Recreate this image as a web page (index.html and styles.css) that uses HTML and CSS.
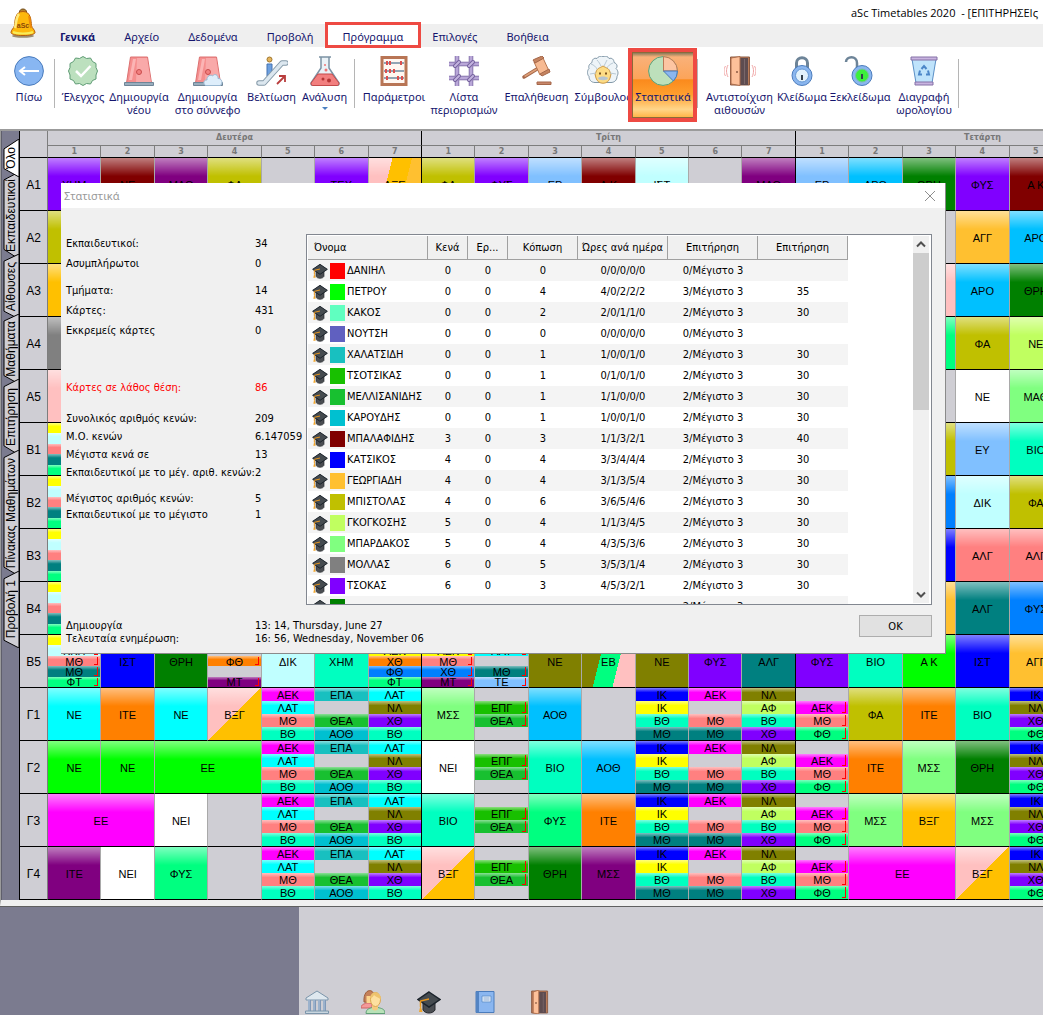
FILE: index.html
```html
<!DOCTYPE html>
<html lang="el">
<head>
<meta charset="utf-8">
<title>aSc Timetables 2020</title>
<link rel="stylesheet" href="styles.css">
</head>
<body>
<svg class="defs" aria-hidden="true">
  <symbol id="cap" viewBox="0 0 24 24">
    <path d="M6 12v8c2 4 10 4 12 0v-8z" fill="#4a4d52" stroke="#26292d"/>
    <path d="M12 2 23 9.500 12 17 1 9.500z" fill="#454b50" stroke="#1b232b" stroke-width="1.500"/>
    <path d="M12 9 3.500 11v6" fill="none" stroke="#e8961e" stroke-width="1.500"/>
    <path d="M3.500 15 2 22h3.500z" fill="#f0a52c"/>
  </symbol>
  <symbol id="siren" viewBox="0 0 30 30">
    <path d="M6.500 1h17l4 26h-25z" fill="#f58e8e" stroke="#dc7171"/>
    <path d="M13 2h10l4 24H12z" fill="#f9a9a9"/>
    <path d="M9 3h3L8 24H5z" fill="#fbb5b5"/>
    <circle cx="15" cy="16" r="2.500" fill="#f28080" stroke="#c94c4c"/>
    <path d="M.5 26.500h29v3H.5z" fill="#98adbd" stroke="#6f8597"/>
  </symbol>
  <symbol id="door" viewBox="0 0 24 24">
    <path d="M2 1h20v22H2z" fill="#b97b59" stroke="#8b5a42"/>
    <path d="M10 2h10v21H10z" fill="#5e4c50"/>
    <path d="M16 3h1v19h-1z" fill="#7a676a"/>
    <path d="M4 2 11 0v24l-7-1z" fill="#fdc09a" stroke="#ab6d4c"/>
    <circle cx="7.500" cy="13" r="1" fill="#8b5a42"/>
  </symbol>
</svg>

<header class="app-head">
  <svg class="bell" viewBox="0 0 26 30" aria-hidden="true">
    <ellipse cx="13" cy="28" rx="11" ry="1.800" fill="#9b8d72"/>
    <path d="M9.500 4c0-4 7-4 7 0" fill="#b9822b" stroke="#6b4613"/>
    <path d="M13 3.500c8 0 8 9 8.500 14 .4 3 3.500 4 3.500 7 0 4-24 4-24 0 0-3 3-4 3.500-7 .5-5 .500-14 8.500-14z" fill="#fdb80c" stroke="#b25b0d"/>
    <path d="M9 6c-3 3-3 11-4 14" fill="none" stroke="#ffe97a" stroke-width="2.500"/>
    <path d="M19 8c1 4 1 8 2 12" fill="none" stroke="#ee8a07" stroke-width="2"/>
    <path d="M3 24c4 2 16 2 20 0" fill="none" stroke="#f8ec5a" stroke-width="2"/>
    <text x="13" y="20" class="bell-text">aSc</text>
  </svg>
  <div class="titlebar">aSc Timetables 2020&nbsp; - [ΕΠΙΤΗΡΗΣΕΙς</div>
  <nav class="tabs">
    <a href="#" class="home">Γενικά</a>
    <a href="#">Αρχείο</a>
    <a href="#">Δεδομένα</a>
    <a href="#">Προβολή</a>
    <a href="#" class="framed">Πρόγραμμα</a>
    <a href="#">Επιλογές</a>
    <a href="#">Βοήθεια</a>
  </nav>
</header>

<div class="ribbon">
  <button class="tool w-s"><svg viewBox="0 0 30 30"><circle cx="15" cy="15" r="14.400" fill="#88b6f2" stroke="#4b7cbc"/><path d="M25 15H7m4-4-5 4 5 4" fill="none" stroke="#fff" stroke-width="2"/></svg><span>Πίσω</span></button>
  <i class="sep close-by"></i>
  <button class="tool w-s"><svg viewBox="0 0 30 30"><path d="m15 .5 3.500 2 4-.5 2 3.500 3.500 2v4l1.500 3.500L28 19v4l-3.500 1.500-2 3.500-4-.5-3.500 2-3.500-2-4 .5-2-3.500L2 23v-4L.5 15 2 11.500v-4L5.500 5.500 7.500 2l4 .5z" fill="#bce0be" stroke="#5f9c75"/><path d="m8 15 5 5L22.500 10" fill="none" stroke="#fff" stroke-width="2.500"/></svg><span>Έλεγχος</span></button>
  <button class="tool w-l"><svg viewBox="0 0 30 30"><use href="#siren"/></svg><span>Δημιουργία<br>νέου</span></button>
  <button class="tool w-xl"><svg viewBox="0 0 30 30"><use href="#siren"/><path d="M13 29.500c-3-.5-3-6 1-5.500-.5-4 4-6 5.500-4 2-3 6-1 5.500 2.500 4-.5 5.500 6 2 7z" fill="#deeefb" stroke="#9bb9d2"/></svg><span>Δημιουργία<br>στο σύννεφο</span></button>
  <button class="tool w-m"><svg viewBox="0 0 32 30"><path d="M11 8h5v12h-5z" fill="#6da0e0" stroke="#4472b0"/><circle cx="13.500" cy="3.500" r="2.500" fill="#e5b45c" stroke="#a0762c"/><path d="M3 27h5L26 7h4" fill="none" stroke="#8499a8" stroke-width="5.500" stroke-linecap="round" stroke-linejoin="round"/><path d="M3 27h5L26 7h4" fill="none" stroke="#dce7ef" stroke-width="3.500" stroke-linecap="round" stroke-linejoin="round"/><path d="m21 28 8-8m-6 0h6v6" fill="none" stroke="#b93d3d" stroke-width="1.800"/></svg><span>Βελτίωση</span></button>
  <button class="tool w-m"><svg viewBox="0 0 30 30"><path d="M9 1h12M11 1v11L1 27c0 2 1 2.500 2 2.500h24c1 0 2-.5 2-2.500L19 12V1" fill="#eaf2f7" stroke="#7c92a4" stroke-width="1.500"/><path d="M8 18h14l7 9c0 2-1 2.500-2 2.500H3c-1 0-2-.5-2-2.500z" fill="#f27f7f" stroke="#c34a4a"/><circle cx="13" cy="23" r="1.500" fill="#b53535"/><circle cx="19" cy="24.500" r="2" fill="#b53535"/><circle cx="15" cy="9" r="1" fill="#ef7474"/><circle cx="16" cy="14" r="1.500" fill="#ef7474"/></svg><span>Ανάλυση</span><b class="drop"></b></button>
  <i class="sep"></i>
  <button class="tool w-lg"><svg viewBox="0 0 30 30"><path d="M3 1.500h24v27H3z" fill="#fff7f1" stroke="#b87555" stroke-width="3"/><path d="M5 7h20M5 15h20M5 22h20" stroke="#6f8aa0" stroke-width="1.500"/><path d="M8 5v4m3-4v4m11-4v4M7 13v4m4-4v4m4-4v4M8 20v4m11-4v4m4-4v4" stroke="#dc4f4f" stroke-width="2"/></svg><span>Παράμετροι</span></button>
  <button class="tool w-lg"><svg viewBox="0 0 30 30"><path d="M8 0v30M22 0v30M0 8h30M0 22h30" stroke="#75629e" stroke-width="4.500"/><path d="M8 0v30M22 0v30M0 8h30M0 22h30" stroke="#b9a7d8" stroke-width="3"/><path d="m6 10 4-4m10 4 4-4M6 24l4-4m10 4 4-4" stroke="#75629e" stroke-width="4" stroke-linecap="round"/><path d="m6 10 4-4m10 4 4-4M6 24l4-4m10 4 4-4" stroke="#c4b4df" stroke-width="2" stroke-linecap="round"/></svg><span>Λίστα<br>περιορισμών</span></button>
  <button class="tool w-xl"><svg viewBox="0 0 30 30"><path d="M2 21 15 13" stroke="#a5674a" stroke-width="3.500" stroke-linecap="round"/><path d="M2.500 20.500 15 13" stroke="#dd9f77" stroke-width="1.500"/><path d="m12 6 9-4 6 13-9 4z" fill="#f7ba92" stroke="#b67650"/><path d="m13 7-2-3 2-1 7-3 2 2zM18 18l9-5 1 3-8 4z" fill="#c58460" stroke="#a5674a"/><path d="M15 26h14v2.500H15z" fill="#c8876a" stroke="#a5674a"/></svg><span>Επαλήθευση</span></button>
  <button class="tool w-m2"><svg viewBox="0 0 32 30"><path d="M16 .5c3-1 5 0 6 2 3-1 5 1 5 4 3 1 4 4 2 6 3 3 2 6 1 8 0 4-3 6-6 6H8c-4 0-6-3-6-6-2-2-2-6 0-8-1-3 1-5 3-6 0-3 2-5 5-4 1-2 4-3 6-2z" fill="#eef4f8" stroke="#8298a8"/><path d="M9 16c1-4 4-4 7-6 3 2 6 2 7 6l1 2-1 4c-2 7-12 7-14 0l-1-4z" fill="#fddc85" stroke="#cb9847"/><path d="M11 22c2-2 8-2 10 0 0 3-10 3-10 0z" fill="#b6c4cf"/><path d="M12 17.500h2m4 0h2" stroke="#7d5420" stroke-width="2"/><path d="M4 8c3 1 5 3 6 5M10 4c2 2 3 4 4 6m12-3c-3 1-5 3-6 5M20 4l-3 6M3 18l6-1m20 1-6-1" fill="none" stroke="#b9c9d4"/></svg><span>Σύμβουλος</span></button>
  <button class="tool w-l active"><svg viewBox="0 0 30 30"><circle cx="15" cy="15" r="14.400" fill="#bde0bb" stroke="#5e9f76"/><path d="M15.500 15V.6A14.400 14.400 0 0 1 29.400 15z" fill="#fdc5a2" stroke="#bd7956"/><path d="M15.500 15h13.900a14 14 0 0 1-4 10z" fill="#8bb6f0" stroke="#4878b5"/></svg><span>Στατιστικά</span></button>
  <i class="sep"></i>
  <button class="tool w-xl"><svg viewBox="0 0 30 30"><path d="M5.500 1h19v28h-19z" fill="#b97b59" stroke="#8b5a42"/><path d="M14 2h9v27h-9z" fill="#5e4c50"/><path d="M19 3h1v25h-1z" fill="#7a676a"/><path d="M6 2 15 .5v29L6 28z" fill="#fdc09a" stroke="#ab6d4c"/><circle cx="12" cy="16" r="1" fill="#8b5a42"/><path d="M3 9c-2 4-2 8 0 12M.5 10c-2 3-2 7 0 10M27 9c2 4 2 8 0 12m2.500-11c2 3 2 7 0 10" fill="none" stroke="#f0a5a5"/></svg><span>Αντιστοίχιση<br>αιθουσών</span></button>
  <button class="tool w-s"><svg viewBox="0 0 30 30"><path d="M9.500 14V7c0-7 11-7 11 0v7" fill="none" stroke="#6d8498" stroke-width="3"/><circle cx="15" cy="19.500" r="10" fill="#8ab6ef" stroke="#4b7cbc"/><circle cx="15" cy="19.500" r="6.500" fill="#e2f1fb" stroke="#6699d5"/><path d="M15 19v5" stroke="#34414c" stroke-width="2"/></svg><span>Κλείδωμα</span></button>
  <button class="tool w-lm"><svg viewBox="0 0 30 30"><path d="M1 6c0-6 11-7 11 1v5" fill="none" stroke="#6d8498" stroke-width="2.500"/><circle cx="17" cy="19.500" r="10" fill="#8ab6ef" stroke="#4b7cbc"/><circle cx="17" cy="19.500" r="6.500" fill="#3cf03c" stroke="#79bfa5"/><path d="M17 18v5" stroke="#34414c" stroke-width="2"/></svg><span>Ξεκλείδωμα</span></button>
  <button class="tool w-l"><svg viewBox="0 0 30 30"><path d="M3 3h24l-4 24H7z" fill="#bfe3fb" stroke="#5a8fc6"/><path d="M2 1h26v3H2zM6 26h18v3H6z" fill="#c9b4e0" stroke="#8470a6"/><path d="m12.500 13 2.500-3 2.500 3m1.500 1.500 1 4h-3m-4 0h-3l1-4" fill="none" stroke="#4c86c8" stroke-width="2"/></svg><span>Διαγραφή<br>ωρολογίου</span></button>
  <i class="sep"></i>
</div>

<main class="workspace">
  <nav class="views">
    <button class="view v-all on"><svg viewBox="0 0 16 100" preserveAspectRatio="none"><path d="M16 0 1 26V78L16 100z"/></svg><span>Όλο</span></button>
    <button class="view v-teachers"><svg viewBox="0 0 16 100" preserveAspectRatio="none"><path d="M16 0 1 9V89L16 100z"/></svg><span>Εκπαιδευτικοί</span></button>
    <button class="view v-rooms"><svg viewBox="0 0 16 100" preserveAspectRatio="none"><path d="M16 0 1 11V88L16 100z"/></svg><span>Αίθουσες</span></button>
    <button class="view v-lessons"><svg viewBox="0 0 16 100" preserveAspectRatio="none"><path d="M16 0 1 10V88L16 100z"/></svg><span>Μαθήματα</span></button>
    <button class="view v-watch"><svg viewBox="0 0 16 100" preserveAspectRatio="none"><path d="M16 0 1 10V88L16 100z"/></svg><span>Επιτήρηση</span></button>
    <button class="view v-board"><svg viewBox="0 0 16 100" preserveAspectRatio="none"><path d="M16 0 1 6V93L16 100z"/></svg><span>Πίνακας Μαθημάτων</span></button>
    <button class="view v-one"><svg viewBox="0 0 16 100" preserveAspectRatio="none"><path d="M16 0 1 10V90L16 100z"/></svg><span>Προβολή 1</span></button>
  </nav>
  <div class="board"><table class="timetable" id="timetable"></table></div>

  <section class="dialog" role="dialog" aria-label="Στατιστικά">
    <div class="dialog-title"><span>Στατιστικά</span>
      <button class="close" aria-label="Κλείσιμο"><svg viewBox="0 0 12 12"><path d="m1 1 10 10M11 1 1 11" stroke="#8e8e8e" fill="none"/></svg></button>
    </div>
    <div class="dialog-body">
      <div class="facts">
        <dl class="roomy"><dt>Εκπαιδευτικοί:</dt><dd>34</dd><dt>Ασυμπλήρωτοι</dt><dd>0</dd></dl>
        <dl class="roomy"><dt>Τμήματα:</dt><dd>14</dd><dt>Κάρτες:</dt><dd>431</dd><dt>Εκκρεμείς κάρτες</dt><dd>0</dd></dl>
        <dl class="roomy alert"><dt>Κάρτες σε λάθος θέση:</dt><dd>86</dd></dl>
        <dl class="normal"><dt>Συνολικός αριθμός κενών:</dt><dd>209</dd><dt>Μ.Ο. κενών</dt><dd>6.147059</dd><dt>Μέγιστα κενά σε</dt><dd>13</dd><dt>Εκπαιδευτικοί με το μέγ. αριθ. κενών:</dt><dd>2</dd></dl>
        <dl class="tight"><dt>Μέγιστος αριθμός κενών:</dt><dd>5</dd><dt>Εκπαιδευτικοί με το μέγιστο</dt><dd>1</dd></dl>
      </div>
      <div class="list">
        <table class="stats">
          <colgroup><col class="c-name"><col class="c-s"><col class="c-s"><col class="c-m"><col class="c-l"><col class="c-l"><col class="c-l"></colgroup>
          <thead><tr><th>Όνομα</th><th>Κενά</th><th>Ερ...</th><th>Κόπωση</th><th>Ώρες ανά ημέρα</th><th>Επιτήρηση</th><th>Επιτήρηση</th></tr></thead>
          <tbody id="stats"></tbody>
        </table>
        <div class="scrollbar">
          <svg viewBox="0 0 16 16"><path d="m4 10 4-4 4 4" fill="none" stroke="#505050" stroke-width="2"/></svg>
          <div class="thumb"></div>
          <svg viewBox="0 0 16 16"><path d="m4 6 4 4 4-4" fill="none" stroke="#505050" stroke-width="2"/></svg>
        </div>
      </div>
    </div>
    <div class="dialog-foot">
      <dl><dt>Δημιουργία</dt><dd>13: 14, Thursday, June 27</dd><dt>Τελευταία ενημέρωση:</dt><dd>16: 56, Wednesday, November 06</dd></dl>
      <button class="ok">OK</button>
    </div>
  </section>
</main>

<footer class="tray">
  <div class="tray-side"></div>
  <div class="tray-main">
    <button aria-label="Σχολείο"><svg viewBox="0 0 24 24"><path d="M1 8 12 1l11 7v2H1z" fill="#dfe8ef" stroke="#7b95aa"/><path d="M4.500 10v11m5-11v11m5-11v11m5-11v11" stroke="#8099b8" stroke-width="3"/><path d="M4 10v11m5-11v11m5-11v11m5-11v11" stroke="#b8cbe0"/><path d="M.5 21h23v2.500H.5z" fill="#c9d6e0" stroke="#7b95aa"/></svg></button>
    <button aria-label="Τμήματα"><svg viewBox="0 0 24 24"><path d="M0 18c0-4 4-4 5-5h6v5z" fill="#f49a9a" stroke="#cf6464"/><path d="M3 12c-1-14 10-14 10-6v7z" fill="#c5815a" stroke="#9c5f3d"/><path d="M5.500 6h6v7h-6z" fill="#fbd58e"/><path d="M5 23.500c0-5 4-5 6-6h6c3 1 7 1 7 6z" fill="#b8e2b8" stroke="#5f9f77"/><path d="M11 14h6v5c-2 2-4 2-6 0z" fill="#f3ca80"/><ellipse cx="14.500" cy="9.500" rx="5" ry="7" fill="#fde0a0" stroke="#dba750"/><path d="M9 8c1-8 11-7 11 1-3-1-6-3-7-4-1 2-2 3-4 3z" fill="#eec36e"/></svg></button>
    <button aria-label="Εκπαιδευτικοί"><svg viewBox="0 0 24 24"><use href="#cap"/></svg></button>
    <button aria-label="Μαθήματα"><svg viewBox="0 0 24 24"><path d="M3 1.500h18v21H3z" fill="#8ab6f0" stroke="#4b7cbc"/><path d="M3 1.500h3v21H3z" fill="#5384c3"/><path d="M9 6h9v6H9z" fill="#e8f0fa" stroke="#6897cf"/><path d="M10.500 8h6m-6 2h6" stroke="#8aa9cf"/></svg></button>
    <button aria-label="Αίθουσες"><svg viewBox="0 0 24 24"><g transform="translate(1 0) scale(.8 1)"><use href="#door" width="24" height="24"/></g></svg></button>
  </div>
</footer>
<script src="app.js"></script>
</body>
</html>
```
FILE: styles.css
```css
* { box-sizing: border-box; }

body {
  margin: 0;
  min-height: 100vh;
  display: flex;
  flex-direction: column;
  overflow: hidden;
  background: #fff;
  color: #000;
  font: 11px/16px "DejaVu Sans Condensed", "Noto Sans", sans-serif;
}

button {
  margin: 0;
  padding: 0;
  border: 0;
  background: none;
  color: inherit;
  font: inherit;
}

dl, dd { margin: 0; }
.defs { display: none; }

/* Title bar and menu tabs */
.app-head { position: relative; }

.titlebar {
  height: 24px;
  padding-left: 851px;
  overflow: hidden;
  white-space: nowrap;
  font: 11px/26px "Open Sans", sans-serif;
}

.bell {
  position: absolute;
  left: 10px;
  top: 8px;
  width: 26px;
  height: 30px;
}

.bell-text {
  font: bold 7px "Liberation Sans", sans-serif;
  text-anchor: middle;
  fill: #8a4708;
}

.tabs {
  display: flex;
  gap: 29px;
  height: 23px;
  padding-left: 60px;
  background: #efefef;
}

.tabs a {
  position: relative;
  color: #15156e;
  font: 11px/26px "Noto Sans", sans-serif;
  text-decoration: none;
}

.tabs .home { font-weight: bold; }
.tabs .framed { z-index: 1; }

.tabs .framed::before {
  content: "";
  position: absolute;
  z-index: -1;
  inset: -2px -18px -1px -18px;
  border: 3px solid #ee4a43;
  background: #fff;
}

/* Ribbon */
.ribbon {
  display: flex;
  height: 84px;
  padding: 5px 0 0 4px;
  border-bottom: 2px solid #9b9b9b;
}

.tool {
  position: relative;
  flex: none;
  display: flex;
  flex-direction: column;
  align-items: center;
  height: 66px;
  padding-top: 4px;
  color: #15156e;
  font: 11px/13px "Noto Sans", sans-serif;
  white-space: nowrap;
}

.tool svg { width: 32px; height: 30px; margin-bottom: 4px; }
.tool svg, .tool span { flex: none; }

.w-s { width: 50px; }
.w-m { width: 53px; }
.w-m2 { width: 58px; }
.w-l { width: 62px; }
.w-lm { width: 66px; }
.w-lg { width: 70px; }
.w-xl { width: 75px; }

.sep {
  flex: none;
  width: 1px;
  height: 49px;
  margin: 7px 4px 0 3px;
  background: #b5b5b5;
}

.sep.close-by { margin: 7px 3px 0 0; }

.drop {
  margin-top: 4px;
  border: 3px solid transparent;
  border-top-color: #4a7fc1;
  border-bottom: 0;
}

.active {
  border: 1px solid #8a6a3a;
  padding-top: 3px;
  background: linear-gradient(#8a7a5a 0, #f9b179 4px, #fca45a 40%, #fb8a1c 42%, #ff9f2e 65%, #ffd68a 88%, #ffb648);
}

.active::after {
  content: "";
  position: absolute;
  inset: -5px -4px -5px -5px;
  border: 4px solid #ee4a43;
}

/* Workspace: view tabs on the left, timetable beside them */
.workspace {
  position: relative;
  display: flex;
  border-left: 1px solid #9b9b9b;
  border-bottom: 6px solid #f0f0f0;
  background: #7b7b8f;
}

.views {
  display: flex;
  flex: none;
  flex-direction: column;
  width: 18px;
  padding: 8px 0 0 1px;
  border-left: 1px solid #5f5f6c;
}

.view {
  position: relative;
  display: flex;
  align-items: center;
  justify-content: center;
  width: 16px;
  margin-bottom: -5px;
  font: 12px/16px "Liberation Sans", sans-serif;
}

.view svg {
  position: absolute;
  inset: 0;
  width: 16px;
  height: 100%;
  fill: #cfced4;
  stroke: #000;
}

.view path { vector-effect: non-scaling-stroke; }
.view.on { z-index: 1; }
.view.on svg { fill: #fff; }

.view span {
  position: relative;
  writing-mode: vertical-rl;
  transform: rotate(180deg);
  white-space: nowrap;
}

.v-all { height: 38px; }
.v-teachers { height: 87px; }
.v-rooms { height: 65px; }
.v-lessons { height: 70px; }
.v-watch { height: 76px; }
.v-board { height: 126px; }
.v-one { height: 77px; }

.board { flex: 1; min-width: 0; overflow: hidden; }

.timetable {
  width: 1151px;
  table-layout: fixed;
  border-spacing: 0;
  border-left: 1px solid #000;
  background: #cfced4;
  font: 11px/13px "Liberation Sans", sans-serif;
}

.timetable th, .timetable td {
  padding: 0;
  border-right: 1px solid #a9a9a9;
  border-bottom: 1px solid #000;
  text-align: center;
}

.timetable .day-end { border-right-color: #000; }

.timetable thead th {
  height: 12px;
  border-color: #7d7d7d;
  color: #777;
  font: bold 8px/11px "DejaVu Sans", sans-serif;
}

.timetable thead .days th { height: 15px; line-height: 14px; }
.timetable thead .hours th, .timetable thead .corner { border-bottom-color: #000; }
.timetable thead .day-end { border-right-color: #000; }
.timetable .corner { width: 28px; }

.timetable tbody th {
  padding-top: 2px;
  border-right-color: #7d7d7d;
  font-weight: normal;
  font-size: 12px;
}

.slot {
  display: flex;
  flex-direction: column;
  height: 52px;
  overflow: hidden;
}

.card {
  --stripes: linear-gradient(transparent, transparent);
  position: relative;
  display: flex;
  flex: 1 1 0;
  align-items: center;
  justify-content: center;
  min-height: 0;
  padding-top: 2px;
  background: var(--stripes), linear-gradient(rgba(255, 255, 255, .5), rgba(255, 255, 255, 0) 35%), var(--fill);
}

.card.free { background: none; }

.card.fixed::after {
  content: "";
  position: absolute;
  right: 2px;
  top: 1px;
  bottom: 1px;
  width: 3px;
  border-right: 1px solid #f00;
  border-bottom: 1px solid #f00;
}

/* Statistics dialog */
.dialog {
  position: absolute;
  left: 60px;
  top: 52px;
  width: 885px;
  height: 471px;
  display: flex;
  flex-direction: column;
  background: #f0f0f0;
  border-right: 1px solid #8a8a8a;
  border-bottom: 1px solid #8a8a8a;
}

.dialog-title {
  display: flex;
  justify-content: space-between;
  align-items: center;
  height: 25px;
  padding: 0 9px 0 3px;
  background: #fff;
  color: #999;
  font: 11px/24px "Noto Sans", sans-serif;
}

.close { display: flex; }
.close svg { width: 12px; height: 12px; }

.dialog-body {
  display: flex;
  flex: none;
  justify-content: space-between;
  height: 397px;
  padding: 26px 13px 0 5px;
}

.dialog dl {
  display: grid;
  grid-template-columns: 189px auto;
  justify-content: start;
  white-space: nowrap;
}

.facts { flex: none; width: 240px; }
.facts .roomy { line-height: 20px; margin-bottom: 7px; }
.facts .alert { margin: 37px 0 12px; color: #f00; }
.facts .normal { line-height: 18px; margin-bottom: 9px; }

.list {
  display: flex;
  justify-content: space-between;
  flex: none;
  width: 626px;
  height: 371px;
  padding: 1px;
  border: 1px solid #828790;
  background: #fff;
  overflow: hidden;
}

.stats {
  width: 540px;
  height: max-content;
  table-layout: fixed;
  border-spacing: 0;
}

.stats th {
  height: 24px;
  padding: 0;
  border-right: 1px solid #a0a0a0;
  border-bottom: 1px solid #a0a0a0;
  background: #f0f0f0;
  font-weight: normal;
}

.stats td {
  height: 21px;
  padding: 0;
  line-height: 20px;
  text-align: center;
  white-space: nowrap;
}

.stats th:first-child { padding-left: 6px; text-align: left; }
.stats td:first-child { padding-left: 4px; text-align: left; }
.stats tr:nth-child(odd) td { background: #f4f4f4; }

.c-name { width: 120px; }
.c-s { width: 40px; }
.c-m { width: 70px; }
.c-l { width: 90px; }

.who { display: flex; align-items: center; gap: 2px; }
.who svg { width: 16px; height: 16px; }

.swatch {
  width: 15px;
  height: 16px;
  background: var(--fill);
}

.scrollbar {
  display: flex;
  flex-direction: column;
  width: 16px;
  margin-right: 1px;
  background: #f0f0f0;
}

.scrollbar svg { flex: none; width: 16px; height: 17px; }
.thumb { height: 157px; margin-bottom: auto; background: #cdcdcd; }

.dialog-foot {
  display: flex;
  justify-content: space-between;
  padding: 14px 13px 0 5px;
  line-height: 13px;
}

.ok {
  width: 73px;
  height: 22px;
  margin-top: -4px;
  border: 1px solid #adadad;
  background: #e1e1e1;
}

/* Tray of unplaced cards */
.tray {
  display: flex;
  flex: 1;
  border-top: 1px solid #606060;
  background: #cfced4;
}

.tray-side { width: 299px; background: #7b7b8f; }

.tray-main {
  display: flex;
  align-items: flex-end;
  gap: 32px;
  padding: 82px 0 1px 6px;
}

.tray-main button { display: flex; }
.tray-main svg { width: 24px; height: 24px; }
```
FILE: app.js
```js
// A cell is "colour:label"; "/" stacks the groups of a divided class,
// "+" mixes slanted stripes, "!" marks a locked card, "*2" is a double lesson.
const lang = "ff00ff:ΑΕΚ/00ffff:ΛΑΤ/ff8080:ΜΘ/00ffc0:ΒΘ";
const arts = "18c0c0:ΕΠΑ//18c030:ΘΕΑ/00c0d0:ΑΟΘ";
const latin = "00ffff:ΛΑΤ/808000:ΝΛ/8000ff:ΧΘ/00ffc0:ΒΘ";
const elect = "/18c000:ΕΠΓ!/18c030:ΘΕΑ!/";
const five = "0000ff:ΙΚ/ffff00:ΙΚ/00ffc0:ΒΘ/008080:ΜΘ";
const six = "ff00ff:ΑΕΚ//ff8080:ΜΘ/008080:ΜΘ";
const seven = "808000:ΝΛ/c0ff60:ΑΦ/00ffc0:ΒΘ/8000ff:ΧΘ";
const wedOne = "/ff00ff:ΑΕΚ!/ff8080:ΜΘ!/00ff80:ΦΘ!";
const wedFive = "0000ff:ΙΚ/808000:ΝΛ/8000ff:ΧΘ/00ff80:ΦΘ";
const bands = "ffff00:/c0ffff:/ff8080:/008080:/00ff80:";
const gap = n => Array(n).fill("");

const rows = {
  "Α1": ["8000ff:ΧΗΜ", "800000:ΝΕ", "800080:ΜΑΘ", "c0c000:ΦΑ", "", "8000ff:ΤΕΧ", "ffc0c0+ffc000+ffc030:ΑΞΕ",
    "c0c000:ΦΑ", "8000ff:ΦΥΣ", "80c0ff:ΕΡ", "800000:Α Κ", "c0ffff:ΙΣΤ", "", "800080:ΜΑΘ",
    "80c0ff:ΕΡ", "00c0ff:ΑΡΟ", "008000:ΘΡΗ", "8000ff:ΦΥΣ", "800000:Α Κ"],
  "Α2": ["c0c000:", ...gap(16), "ffc030:ΑΓΓ", "00c0ff:ΑΡΟ"],
  "Α3": ["ffc000:", ...gap(15), "ffc0c0:", "00c0ff:ΑΡΟ", "008000:ΘΡΗ"],
  "Α4": ["808080:", ...gap(15), "00ff80:", "c0c000:ΦΑ", "c0ff60:ΝΕ"],
  "Α5": ["ffc0c0:", ...gap(16), "ffffff:ΝΕ", "80ff80:ΜΑΘ"],
  "Β1": [bands, ...gap(15), "c0c000:", "80c0ff:ΕΥ", "00ffc0:ΒΙΟ"],
  "Β2": [bands, ...gap(15), "0080ff:", "c0ffff:ΔΙΚ", "c0c000:ΦΑ"],
  "Β3": [bands, ...gap(15), "0000ff:", "ff8080:ΑΛΓ", "ff8080:ΑΛΓ"],
  "Β4": [bands, ...gap(15), "ffc030:", "008080:ΑΛΓ", "0080ff:ΦΥΣ"],
  "Β5": ["ffff00:/c0ffff:ΚΚΗ!/ff8080:ΜΘ!/008080:ΜΘ!/00ff80:ΦΤ!", "0000ff:ΙΣΤ", "008000:ΘΡΗ", "//ff8000:ΦΘ!//800080:ΜΤ!",
    "c0ffff:ΔΙΚ", "00ffc0:ΧΗΜ", "/ffff00:ΑΕΚ/ff8000:ΧΘ/0080ff:ΦΘ/00ff80:ΦΤ",
    "/ffff00:ΑΕΚ!/ff8080:ΜΘ!/0080ff:ΧΘ!/800080:ΜΤ!", "/00ffff:ΛΑΤ!//008080:ΜΘ!/80c0ff:ΤΕ!", "808000:ΝΕ",
    "808000+00ff80+ffc0c0:ΕΒ", "808000:ΝΕ", "8000ff:ΦΥΣ", "008080:ΑΛΓ",
    "8000ff:ΦΥΣ", "00ffc0:ΒΙΟ", "00ff00:Α Κ", "0000ff:ΙΣΤ", "ffc030:ΑΓΓ"],
  "Γ1": ["00ffff:ΝΕ", "ff8000:ΙΤΕ", "00ffff:ΝΕ", "ffc0c0+ffc000:ΒΞΓ", lang, arts, latin,
    "80ff80:ΜΣΣ", elect, "00c0ff:ΑΟΘ", "", five, six, seven,
    wedOne, "c0c000:ΦΑ", "ff8000:ΙΤΕ", "00ffc0:ΒΙΟ", wedFive],
  "Γ2": ["00ff00:ΝΕ", "00ff00:ΝΕ", "00ff00:ΕΕ*2", lang, arts, latin,
    "ffffff:ΝΕΙ", elect, "00ffc0:ΒΙΟ", "00c0ff:ΑΟΘ", five, six, seven,
    wedOne, "ff8000:ΙΤΕ", "80ff80:ΜΣΣ", "008000:ΘΡΗ", wedFive],
  "Γ3": ["ff00ff:ΕΕ*2", "ffffff:ΝΕΙ", "", lang, arts, latin,
    "00ffc0:ΒΙΟ", elect, "00ff80:ΦΥΣ", "ff8000:ΙΤΕ", five, six, seven,
    wedOne, "80ff80:ΜΣΣ", "ffc000:ΒΞΓ", "80ff80:ΜΣΣ", wedFive],
  "Γ4": ["800080:ΙΤΕ", "ffffff:ΝΕΙ", "00ff80:ΦΥΣ", "", lang, arts, latin,
    "ffc0c0+ffc000:ΒΞΓ", elect, "008000:ΘΡΗ", "800080:ΜΣΣ", five, six, seven,
    wedOne, "ff00ff:ΕΕ*2", "ffc0c0+ffc000:ΒΞΓ", wedFive]
};

// The first colour carries the highlight; the other stripes lie flat above it.
function fill(spec) {
  const c = spec.split("+").map(v => "#" + v);
  let style = `--fill:${c[0]}`;
  if (c.length === 2) style += `;--stripes:linear-gradient(to bottom right, transparent 50%, ${c[1]} 50%)`;
  if (c.length === 3) style += `;--stripes:linear-gradient(104deg, transparent 36%, ${c[1]} 36%, ${c[1]} 66%, ${c[2]} 66%)`;
  return style;
}

function card(spec) {
  if (!spec) return '<div class="card free"></div>';
  const [colour, label] = spec.split(":");
  const locked = label.endsWith("!");
  return `<div class="card${locked ? " fixed" : ""}" style="${fill(colour)}">${label.replace("!", "")}</div>`;
}

const hours = [...Array(21).keys()];
const end = i => (i % 7 === 6 ? ' class="day-end"' : "");
let html = '<thead><tr class="days"><th class="corner" rowspan="2"></th>' +
  ["Δευτέρα", "Τρίτη", "Τετάρτη"].map(d => `<th colspan="7" class="day-end">${d}</th>`).join("") +
  '</tr><tr class="hours">' + hours.map(i => `<th${end(i)}>${i % 7 + 1}</th>`).join("") + "</tr></thead><tbody>";
for (const [name, cells] of Object.entries(rows)) {
  html += `<tr><th>${name}</th>`;
  let col = 0;
  for (const cell of cells) {
    const [spec, span] = cell.split("*");
    const width = Number(span || 1);
    col += width;
    html += `<td colspan="${width}"${end(col - 1)}><div class="slot">${spec.split("/").map(card).join("")}</div></td>`;
  }
  html += "<td></td><td></td></tr>";
}
document.getElementById("timetable").innerHTML = html + "</tbody>";

const staff = [
  ["ff0000", "ΔΑΝΙΗΛ", 0, 0, 0, "0/0/0/0/0", 0, ""],
  ["00ff00", "ΠΕΤΡΟΥ", 0, 0, 4, "4/0/2/2/2", 3, 35],
  ["60ffc0", "ΚΑΚΟΣ", 0, 0, 2, "2/0/1/1/0", 2, 30],
  ["6060c0", "ΝΟΥΤΣΗ", 0, 0, 0, "0/0/0/0/0", 0, ""],
  ["18c0c0", "ΧΑΛΑΤΣΙΔΗ", 0, 0, 1, "1/0/0/1/0", 2, 30],
  ["18c000", "ΤΣΟΤΣΙΚΑΣ", 0, 0, 1, "0/1/0/1/0", 2, 30],
  ["18c030", "ΜΕΛΛΙΣΑΝΙΔΗΣ", 0, 0, 1, "1/1/0/0/0", 2, 30],
  ["00c0d0", "ΚΑΡΟΥΔΗΣ", 0, 0, 1, "1/0/0/1/0", 2, 30],
  ["800000", "ΜΠΑΛΑΦΙΔΗΣ", 3, 0, 3, "1/1/3/2/1", 3, 40],
  ["0000ff", "ΚΑΤΣΙΚΟΣ", 4, 0, 4, "3/3/4/4/4", 2, 30],
  ["ffc030", "ΓΕΩΡΓΙΑΔΗ", 4, 0, 4, "3/1/3/5/4", 2, 30],
  ["c0c000", "ΜΠΙΣΤΟΛΑΣ", 4, 0, 6, "3/6/5/4/6", 2, 30],
  ["c0ff60", "ΓΚΟΓΚΟΣΗΣ", 5, 0, 4, "1/1/3/4/5", 2, 30],
  ["80ff80", "ΜΠΑΡΔΑΚΟΣ", 5, 0, 4, "4/3/5/3/6", 2, 30],
  ["808080", "ΜΟΛΛΑΣ", 6, 0, 5, "3/5/3/1/4", 2, 30],
  ["8000ff", "ΤΣΟΚΑΣ", 6, 0, 3, "4/5/3/2/1", 2, 30],
  ["008000", "", "", "", "", "", 2, ""]
];
document.getElementById("stats").innerHTML = staff.map(([c, name, gaps, er, tired, perDay, watch, total]) =>
  `<tr><td><div class="who"><svg viewBox="0 0 24 24"><use href="#cap"/></svg><i class="swatch" style="--fill:#${c}"></i>${name}</div></td>` +
  `<td>${gaps}</td><td>${er}</td><td>${tired}</td><td>${perDay}</td><td>${watch}/Μέγιστο 3</td><td>${total}</td></tr>`).join("");
```
